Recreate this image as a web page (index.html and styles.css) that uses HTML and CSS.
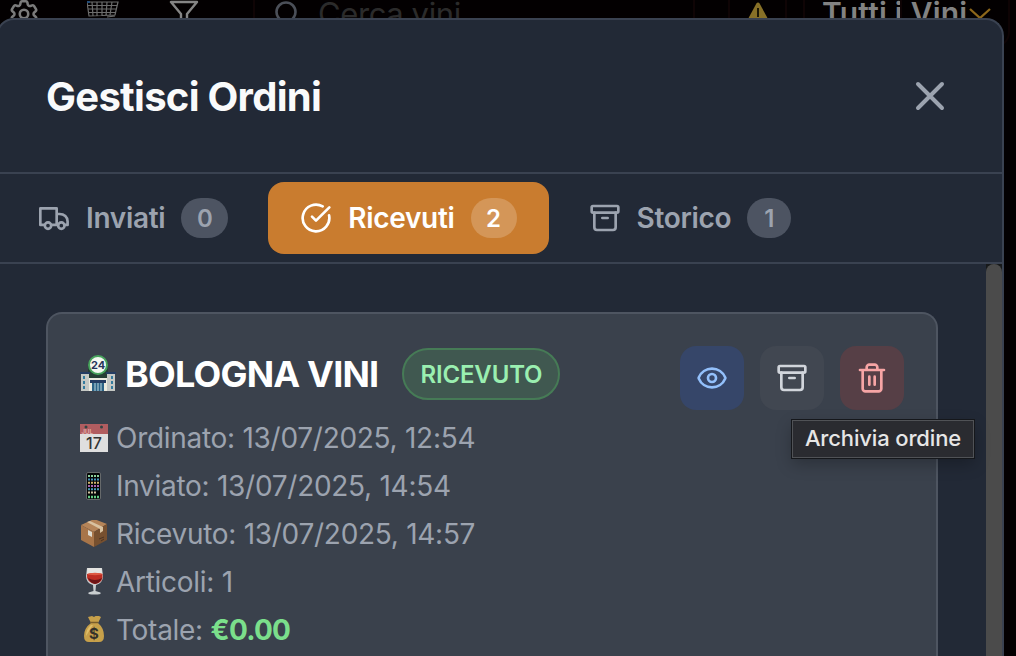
FILE: index.html
```html
<!DOCTYPE html>
<html lang="it">
<head>
<meta charset="utf-8">
<title>Gestisci Ordini</title>
<link rel="stylesheet" href="styles.css">
</head>
<body>
<header class="toolbar">
  <svg class="tool-gear" viewBox="0 0 24 24" fill="none" stroke="currentColor" stroke-width="1.8" stroke-linejoin="round"><path d="M9.594 3.94c.09-.542.56-.94 1.11-.94h2.593c.55 0 1.02.398 1.11.94l.213 1.281c.063.374.313.686.645.87.074.04.147.083.22.127.325.196.72.257 1.075.124l1.217-.456a1.125 1.125 0 0 1 1.37.49l1.296 2.247a1.125 1.125 0 0 1-.26 1.431l-1.003.827c-.293.241-.438.613-.43.992a7.7 7.7 0 0 1 0 .255c-.008.378.137.75.43.991l1.004.827c.424.35.534.955.26 1.43l-1.298 2.247a1.125 1.125 0 0 1-1.369.491l-1.217-.456c-.355-.133-.75-.072-1.076.124l-.22.128c-.331.183-.581.495-.644.869l-.213 1.281c-.09.543-.56.94-1.11.94h-2.594c-.55 0-1.019-.398-1.11-.94l-.213-1.281c-.062-.374-.312-.686-.644-.87l-.22-.127c-.325-.196-.72-.257-1.076-.124l-1.217.456a1.125 1.125 0 0 1-1.369-.49l-1.297-2.247a1.125 1.125 0 0 1 .26-1.431l1.004-.827c.292-.24.437-.613.43-.991v-.255c.007-.38-.138-.751-.43-.992l-1.004-.827a1.125 1.125 0 0 1-.26-1.43l1.297-2.247a1.125 1.125 0 0 1 1.37-.491l1.216.456c.356.133.751.072 1.076-.124l.22-.128c.332-.183.582-.495.644-.869z"/><circle cx="12" cy="12" r="3"/></svg>
  <svg class="tool-cart" viewBox="0 0 32 18" fill="none" stroke="#6c6c6c" stroke-width="1.2"><path d="M0 2h31l-3 13-26 1zM1 5.500h29M1 9h28M1 12.500h28M5 2l1 14M10 2v14M15 2v14M20 2l-1 14M25 2l-2 13M20 17l8-1"/><path stroke="#244d78" stroke-width="2" d="M0 2h3"/></svg>
  <svg class="tool-funnel" viewBox="0 0 30 18" fill="none" stroke="#858585" stroke-width="2.400" stroke-linejoin="round"><path d="M12 20v-6L2 2h26L18 14v6"/></svg>
  <div class="search">
    <svg class="search-icon" viewBox="0 0 32 32" fill="none" stroke="#4b4f58" stroke-width="2.600"><circle cx="12" cy="12" r="9.500"/><path d="M19 19l8 8"/></svg>
    <span>Cerca vini</span>
  </div>
  <div class="tool-cell"></div>
  <div class="tool-cell warning"><svg viewBox="0 0 20 18"><path fill="#877027" d="M10 2.500q1 0 1.600 1L20 19H0L8.400 3.500q.6-1 1.600-1z"/><path stroke="#1b1705" stroke-width="2" d="M10 8v9"/></svg></div>
  <div class="tool-cell narrow"></div>
  <div class="filter"><span>Tutti i Vini</span><svg viewBox="0 0 22 12" fill="none" stroke="#8d671b" stroke-width="2.300"><path d="M1 1l10 9L21 1"/></svg></div>
</header>
<div class="backdrop-panel"></div>

<main class="modal">
  <div class="modal-header">
    <h1>Gestisci Ordini</h1>
    <svg class="close" viewBox="0 0 24 24" fill="none" stroke="currentColor" stroke-width="2" stroke-linecap="round"><path d="M18 6 6 18M6 6l12 12"/></svg>
  </div>
  <nav class="tabs">
    <div class="tab">
      <svg class="icon" viewBox="0 0 24 24"><path d="M5 17.200H1.750V4.800H14v12.400h-4M14 9h2.200c3.400 0 6 2.300 6 5.600v2.600H20M14 17.200h1"/><circle cx="7.500" cy="17.700" r="2.400"/><circle cx="17.500" cy="17.700" r="2.400"/></svg>
      <span class="tab-label">Inviati</span><span class="count">0</span>
    </div>
    <div class="tab active">
      <svg class="icon" viewBox="0 0 24 24"><path d="M21.801 10A10 10 0 1 1 17 3.335"/><path d="m9 11 3 3L22 4"/></svg>
      <span class="tab-label">Ricevuti</span><span class="count">2</span>
    </div>
    <div class="tab">
      <svg class="icon" viewBox="0 0 24 24"><rect x="2" y="3" width="20" height="5" rx="1"/><path d="M4 8v11a2 2 0 0 0 2 2h12a2 2 0 0 0 2-2V8M10 12h4"/></svg>
      <span class="tab-label">Storico</span><span class="count">1</span>
    </div>
  </nav>
  <div class="content">
    <section class="card">
      <div class="info">
        <div class="name-row">
          <svg class="store" viewBox="0 0 36 38"><path fill="#263e35" d="M8 8h20v22H8z"/><path fill="#c5c8c4" d="M1 18h8v18H1zM27 18h8v18h-8z"/><path fill="#ecebe0" d="M9 23h18v13H9z"/><path fill="#243c62" d="M0 17h10v2H0zM26 17h10v2H26zM10 25h16v3H10z"/><path fill="#347b9e" d="M3 21h2v3H3zm0 5h2v3H3zm0 5h2v3H3zM31 21h2v3h-2zm0 5h2v3h-2zm0 5h2v3h-2z"/><path fill="#2b6387" d="M12 28h12v8H12z"/><path stroke="#bfd8dc" d="M15 28v8M18 28v8M21 28v8"/><circle cx="18" cy="10" r="9" fill="#f4f8f1" stroke="#48a35d" stroke-width="2"/><text x="18" y="14" text-anchor="middle" font-size="11" font-weight="700" fill="#26345a">24</text></svg>
          <h2>BOLOGNA VINI</h2>
          <span class="status">RICEVUTO</span>
        </div>
        <div class="row">
          <svg viewBox="0 0 28 28"><path fill="#dfdfdf" d="M0 0h28v28H0z"/><path fill="#b15d60" d="M0 0h28v10H0z"/><circle cx="6" cy="3" r="1.500" fill="#344"/><circle cx="21.500" cy="3" r="1.500" fill="#344"/><text x="1.500" y="9.500" font-size="6" font-weight="600" fill="#e2b0ae">JUL</text><text x="14" y="25" text-anchor="middle" font-size="16" font-weight="500" fill="#333">17</text></svg>
          <span>Ordinato: 13/07/2025, 12:54</span>
        </div>
        <div class="row">
          <svg viewBox="0 0 28 28"><rect x="6.500" y=".5" width="14" height="27" rx="1.500" fill="#050607" stroke="#66696b"/><g stroke-width="2" stroke-dasharray="2 1"><path stroke="#8ccf9b" d="M8 4h11.500"/><path stroke="#4795bd" d="M8 7.500h11.500"/><path stroke="#cdb46c" d="M8 10.700h11.500"/><path stroke="#a866b0" d="M8 14h11.500"/><path stroke="#499ebc" d="M8 17.200h11.500"/><path stroke="#d1c3a1" d="M8 20.500h8"/><path stroke="#64ce84" stroke-width="2.500" d="M8 25h11.500"/></g></svg>
          <span>Inviato: 13/07/2025, 14:54</span>
        </div>
        <div class="row">
          <svg viewBox="0 0 28 28"><path fill="#b58458" d="M1 5 14 -1l13 5-13 8z"/><path fill="#a87549" d="m1 5 13 7v15L1 20z"/><path fill="#77502f" d="m27 4-13 8v15l13-7z"/><path fill="#d9c2a0" d="m7 2 3-1 13 6v4l-3 2v-4z"/><path fill="#dedbd0" d="m8 10 4 2v5l-4-2z"/><path stroke="#4c3423" d="m19 19 5-2m-3 4 3-2"/></svg>
          <span>Ricevuto: 13/07/2025, 14:57</span>
        </div>
        <div class="row">
          <svg viewBox="0 0 28 28"><path fill="#c9ced0" d="M7 0q7-1 15 0l1 8q0 7-7 9l-.5 6 5 1.500v1.500q-6 1-12 0v-1.500l5-1.500-.5-6q-7-2-7-9z"/><path fill="#e4e4e1" d="M7.500 0h14l.7 6H7z"/><path fill="#be2d22" d="M7 6q8-2 15.500 0 1 9-7.500 10Q6 14 7 6z"/><path fill="#6d1517" d="M8 10q7 4 14 0-2 5-7 6-5-1-7-6z"/><ellipse cx="15" cy="6" rx="7.500" ry="1.200" fill="#df5942"/></svg>
          <span>Articoli: 1</span>
        </div>
        <div class="row">
          <svg viewBox="0 0 28 28"><path fill="#c7a04a" d="m8 1 4-1 2 1 3-2 4 2-3 6q6 5 6 13 0 6-5 6H9q-5 0-5-6 0-8 7-13z"/><path fill="#dfbd69" d="M11 9q-5 4-5 11 5-8 7-11z"/><path stroke="#795d2c" stroke-width="1.500" d="M10 6.500h8"/><text x="14" y="22.500" text-anchor="middle" font-size="15" font-weight="700" fill="#34312a">$</text></svg>
          <span>Totale: <strong>€0.00</strong></span>
        </div>
      </div>
      <div class="actions">
        <div class="action view"><svg class="icon" viewBox="0 0 24 24"><path d="M2.062 12.348a1 1 0 0 1 0-.696 10.750 10.750 0 0 1 19.876 0 1 1 0 0 1 0 .696 10.750 10.750 0 0 1-19.876 0"/><circle cx="12" cy="12" r="3"/></svg></div>
        <div class="action archive"><svg class="icon" viewBox="0 0 24 24"><rect x="2" y="3" width="20" height="5" rx="1"/><path d="M4 8v11a2 2 0 0 0 2 2h12a2 2 0 0 0 2-2V8M10 12h4"/></svg><span class="tooltip">Archivia ordine</span></div>
        <div class="action delete"><svg class="icon" viewBox="0 0 24 24"><path d="M3 6h18M19 6v14c0 1-1 2-2 2H7c-1 0-2-1-2-2V6M8 6V4c0-1 1-2 2-2h4c1 0 2 1 2 2v2M10 11v6M14 11v6"/></svg></div>
      </div>
    </section>
    <div class="scrollbar"><div class="thumb"></div></div>
  </div>
</main>
</body>
</html>
```
FILE: styles.css
```css
* { box-sizing: border-box; }
body {
  margin: 0;
  height: 656px;
  overflow: hidden;
  background: #030001;
  font-family: Inter, "Liberation Sans", sans-serif;
  display: flex;
  flex-direction: column;
  position: relative;
}
svg { display: block; flex: none; }
h1, h2 { margin: 0; white-space: nowrap; }

.toolbar { height: 18px; flex: none; display: flex; overflow: hidden; color: #7b7b7b; }
.tool-gear { width: 34px; height: 34px; margin: -3px 0 0 7px; }
.tool-cart { width: 32px; height: 18px; margin-left: 46px; }
.tool-funnel { width: 30px; height: 18px; margin-left: 50px; }
.search {
  width: 442px; height: 60px; margin-left: 54px; padding-left: 19px;
  display: flex; gap: 12px; border-left: 2px solid #0f0405; border-right: 2px solid #0f0405;
  color: #2b2b2b; font-size: 31px; letter-spacing: -.4px; line-height: 32px; white-space: nowrap;
}
.search span { margin-top: -2px; }
.search-icon { width: 32px; height: 32px; }
.tool-cell { width: 35px; height: 18px; flex: none; border-right: 2px solid #0f0405; }
.tool-cell.warning { width: 57px; padding-left: 18px; }
.tool-cell.narrow { width: 18px; }
.warning svg { width: 20px; height: 18px; }
.filter { display: flex; margin-left: 17px; color: #828282; font-size: 30px; font-weight: 600; letter-spacing: .2px; line-height: 32px; white-space: nowrap; }
.filter span { margin-top: -3px; width: 147px; }
.filter svg { width: 22px; height: 12px; margin-top: 8px; }

.backdrop-panel {
  position: absolute; left: 900px; top: -40px; width: 110px; height: 88px;
  border: 2px solid #0e0304; border-radius: 16px;
}

.modal {
  position: relative;
  width: 1008px; height: 638px; flex: none; margin-left: -4px;
  background: #222936; border: 2px solid #3a4251; border-bottom: 0; border-radius: 18px 18px 0 0;
  display: flex; flex-direction: column;
}
.modal-header {
  height: 154px; padding: 0 48px; flex: none;
  display: flex; align-items: center; justify-content: space-between;
  border-bottom: 2px solid #3a4251;
}
h1 { padding-top: 2px; font-size: 40px; line-height: 56px; font-weight: 700; letter-spacing: -.72px; color: #f9fafb; }
.close { width: 48px; height: 48px; color: #9ca3af; }

.tabs { height: 90px; padding: 8px; flex: none; display: flex; gap: 8px; border-bottom: 2px solid #3a4251; }
.tab {
  height: 72px; padding: 0 32px; border-radius: 16px;
  display: flex; align-items: center; gap: 16px;
  font-size: 28px; font-weight: 600; letter-spacing: -.3px; color: #9ca3af;
}
.tab.active { background: #c97c2f; color: #fff; }
.icon { width: 32px; height: 32px; fill: none; stroke: currentColor; stroke-width: 2; stroke-linecap: round; stroke-linejoin: round; }
.count { min-width: 44px; height: 40px; padding: 5px 15.500px 3px; border-radius: 20px; background: #4d5462; font-size: 24px; line-height: 32px; letter-spacing: 0; text-align: center; }
.active .count { background: #d49658; }

.content { flex: 1; min-height: 0; display: flex; }
.card {
  flex: 1; margin: 48px 48px 0; padding: 32px 32px 0;
  display: flex; justify-content: space-between;
  background: #3a414c; border: 2px solid #4e5561; border-bottom: 0; border-radius: 16px 16px 0 0;
}
.info { display: flex; flex-direction: column; gap: 8px; }
.name-row { display: flex; align-items: center; height: 56px; margin-bottom: 8px; }
.store { width: 36px; height: 38px; margin-right: 9px; }
h2 { font-size: 36px; line-height: 56px; font-weight: 650; letter-spacing: -.8px; color: #fff; }
.status {
  margin-left: 24px; height: 52px; padding: 9px 16px 7px; border: 2px solid #467b56; border-radius: 26px;
  background: #405850; color: #9aefb0; font-size: 24px; line-height: 32px; font-weight: 600; letter-spacing: -.15px;
}
.row { display: flex; align-items: center; gap: 8px; height: 40px; font-size: 28px; line-height: 40px; letter-spacing: -.28px; color: #9ca3af; white-space: nowrap; }
.row svg { width: 28px; height: 28px; letter-spacing: 0; }
.row strong { color: #7bdf8b; font-weight: 650; letter-spacing: -.8px; }

.actions { display: flex; gap: 16px; }
.action { position: relative; width: 64px; height: 64px; border-radius: 16px; display: flex; align-items: center; justify-content: center; }
.view { background: #364669; color: #93c0fb; }
.archive { background: #414751; color: #d1d5db; }
.delete { background: #563f46; color: #f7a5a5; }
.tooltip {
  position: absolute; z-index: 2; left: 32px; top: 74px; width: 182px; height: 38px;
  background: #2a2b30; border: 1px solid #505256; box-shadow: 0 0 0 1px #15171b, 0 6px 16px rgba(0, 0, 0, .25);
  color: #e6e6e6; font-size: 22px; font-weight: 450; letter-spacing: -.15px; line-height: 35px; text-align: center; white-space: nowrap;
}
.scrollbar { width: 16px; background: #17191a; }
.thumb { height: 100%; border-radius: 8px 8px 0 0; background: #4b4b4b; }
```
